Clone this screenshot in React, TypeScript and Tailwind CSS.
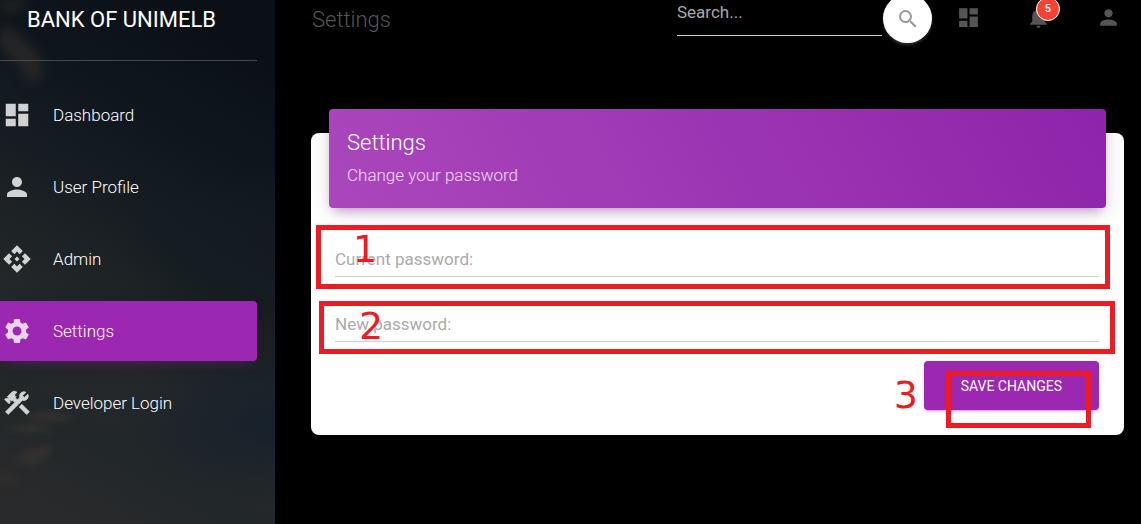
import React from "react";
import {
  MdApi,
  MdDashboard,
  MdNotifications,
  MdPerson,
  MdSearch,
  MdSettings,
} from "react-icons/md";

type NavItem = {
  label: string;
  icon: React.ComponentType<{ className?: string }>;
  active?: boolean;
};

function ToolsIcon({ className }: { className?: string }) {
  return (
    <svg
      aria-hidden="true"
      viewBox="0 0 24 24"
      fill="currentColor"
      stroke="currentColor"
      strokeWidth="0.6"
      className={className}
    >
      <path d="M13.78 15.17l2.12-2.12 6 6-2.12 2.12z" />
      <path d="M17.5 10c1.93 0 3.5-1.57 3.5-3.5 0-.58-.16-1.12-.41-1.6l-2.7 2.7-1.49-1.49 2.7-2.7c-.48-.25-1.02-.41-1.6-.41C15.57 3 14 4.57 14 6.5c0 .41.08.8.21 1.16l-1.85 1.85-1.78-1.78.71-.71-1.41-1.41L12 3.49c-1.17-1.17-3.07-1.17-4.24 0L4.22 7.03l1.41 1.41H2.81l-.71.71 3.54 3.54.71-.71V9.15l1.41 1.41.71-.71 1.78 1.78-7.41 7.41 2.12 2.12L16.34 9.79c.36.13.75.21 1.16.21z" />
    </svg>
  );
}

const navItems: NavItem[] = [
  { label: "Dashboard", icon: MdDashboard },
  { label: "User Profile", icon: MdPerson },
  { label: "Admin", icon: MdApi },
  { label: "Settings", icon: MdSettings, active: true },
  { label: "Developer Login", icon: ToolsIcon },
];

function NightSky() {
  return (
    <svg
      aria-hidden="true"
      className="absolute inset-0 h-full w-full"
      viewBox="0 0 275 524"
      preserveAspectRatio="xMidYMid slice"
    >
      <defs>
        <linearGradient id="sky" x1="0.6" y1="0" x2="0.3" y2="1">
          <stop offset="0" stopColor="#0b1017" />
          <stop offset="0.25" stopColor="#10171e" />
          <stop offset="0.5" stopColor="#1b2124" />
          <stop offset="0.68" stopColor="#25282a" />
          <stop offset="0.85" stopColor="#222729" />
          <stop offset="1" stopColor="#292a2c" />
        </linearGradient>
        <radialGradient id="night">
          <stop offset="0" stopColor="#17212b" />
          <stop offset="1" stopColor="#17212b" stopOpacity="0" />
        </radialGradient>
        <radialGradient id="dusk">
          <stop offset="0" stopColor="#131b21" />
          <stop offset="1" stopColor="#131b21" stopOpacity="0" />
        </radialGradient>
        <filter id="soft" x="-50%" y="-50%" width="200%" height="200%" colorInterpolationFilters="sRGB">
          <feGaussianBlur stdDeviation="6" />
        </filter>
        <filter id="wisp" x="-50%" y="-50%" width="200%" height="200%" colorInterpolationFilters="sRGB">
          <feGaussianBlur stdDeviation="3" />
        </filter>
      </defs>
      <rect width="275" height="524" fill="url(#sky)" />
      <ellipse cx="265" cy="425" rx="150" ry="80" fill="url(#night)" />
      <ellipse cx="270" cy="245" rx="150" ry="80" fill="url(#dusk)" />
      <path d="M0 24 L18 34 L40 56 L44 74 L32 84 L16 62 L0 48Z" fill="#262626" filter="url(#soft)" />
      <path d="M0 0 L28 0 L20 10 L0 12Z" fill="#242424" filter="url(#soft)" />
      <g fill="#32302f" filter="url(#wisp)">
        <path d="M22 414 L52 411 L76 416 L62 422 L36 421Z" />
        <path d="M4 428 L32 424 L56 430 L30 434Z" />
        <path d="M14 456 L34 447 L54 446 L46 458 L30 468Z" />
        <path d="M0 470 L16 478 L22 484 L0 484Z" opacity="0.6" />
      </g>
    </svg>
  );
}

function Sidebar() {
  return (
    <aside className="relative w-[275px] shrink-0 overflow-hidden bg-[#14191e] text-white">
      <NightSky />
      <div className="relative pr-[18px]">
        <div className="border-b border-[#47494b] pt-[5px] pb-[25px] pl-[27px]">
          <a href="#home" className="block text-[22px] leading-[30px]">
            BANK OF UNIMELB
          </a>
        </div>
        <nav className="mt-6">
          <ul className="flex flex-col gap-3">
            {navItems.map(({ label, icon: Icon, active }) => (
              <li key={label}>
                <a
                  href={"#" + label.toLowerCase().replace(" ", "-")}
                  aria-current={active ? "page" : undefined}
                  className={
                    "flex h-[60px] items-center gap-[21px] rounded-r pl-0.5 text-[17px] leading-6 font-light " +
                    (active
                      ? "bg-[#9c27b0] shadow-[0_4px_20px_rgba(0,0,0,0.14),0_7px_10px_-5px_rgba(156,39,176,0.4)]"
                      : "")
                  }
                >
                  <Icon className="size-[30px] text-white opacity-80" />
                  <span>{label}</span>
                </a>
              </li>
            ))}
          </ul>
        </nav>
      </div>
    </aside>
  );
}

function TopBar() {
  return (
    <header className="-mt-1.5 flex h-[49px] items-center pr-5 pl-[37px]">
      <h1 className="mt-0.5 flex-1 text-[22px] font-light text-[#555555]">Settings</h1>
      <form className="flex items-center gap-px" onSubmit={(e) => e.preventDefault()}>
        <input
          type="search"
          aria-label="Search"
          placeholder="Search..."
          className="mb-3 h-[46px] w-[205px] border-b border-[#d2d2d2] bg-transparent text-[17px] text-white outline-none placeholder:text-[#aaaaaa]"
        />
        <button
          type="submit"
          aria-label="Search"
          className="flex size-[49px] items-center justify-center rounded-full bg-white text-[#999999] shadow-[0_2px_3px_rgba(153,153,153,0.3)]"
        >
          <MdSearch className="size-6" />
        </button>
      </form>
      <div className="mb-0.5 ml-6 flex items-center gap-[45px] text-[#555555]">
        <button type="button" aria-label="Dashboard">
          <MdDashboard className="size-[25px]" />
        </button>
        <button type="button" aria-label="Notifications" className="relative">
          <MdNotifications className="size-[25px]" />
          <span className="absolute -top-2 left-2.5 flex size-6 items-center justify-center rounded-full border border-white bg-[#f44336] text-[11px] font-medium text-white">
            5
          </span>
        </button>
        <button type="button" aria-label="Profile">
          <MdPerson className="size-[25px]" />
        </button>
      </div>
    </header>
  );
}

function PasswordField({ id, label }: { id: string; label: string }) {
  return (
    <div className="relative">
      <label htmlFor={id} className="absolute top-[9px] left-0 text-[17px] leading-6 text-[#aaaaaa]">
        {label}
      </label>
      <input
        id={id}
        type="password"
        className="block h-[39px] w-full border-b border-[#d2d2d2] bg-transparent text-[17px] outline-none"
      />
    </div>
  );
}

function Marker({ box, digit, children }: { box: string; digit: string; children: string }) {
  return (
    <>
      <span className={"pointer-events-none absolute border-[5px] border-[#ed1c24] " + box} />
      <span
        className={
          "pointer-events-none absolute font-['DejaVu_Sans',sans-serif] text-[38px] leading-10 text-[#ed1c24] " +
          digit
        }
      >
        {children}
      </span>
    </>
  );
}

function SettingsCard() {
  return (
    <section className="relative mt-[90px] mr-[17px] ml-9 rounded-lg bg-white px-[18px] pb-[25px]">
      <div className="relative -top-6 -mb-6 rounded bg-[linear-gradient(60deg,#ab47bc,#8e24aa)] px-[18px] pt-[18px] pb-[21px] font-light text-white shadow-[0_4px_20px_rgba(0,0,0,0.14),0_7px_10px_-5px_rgba(156,39,176,0.4)]">
        <h2 className="text-[22px] leading-8">Settings</h2>
        <p className="mt-1 text-[17px] leading-6 text-white/80">Change your password</p>
      </div>
      <form className="pt-[30px] pr-[7px] pl-1.5" onSubmit={(e) => e.preventDefault()}>
        <div className="flex flex-col gap-[26px]">
          <PasswordField id="current-password" label="Current password:" />
          <PasswordField id="new-password" label="New password:" />
        </div>
        <div className="mt-[19px] flex justify-end">
          <button
            type="submit"
            className="h-[49px] rounded bg-[#9c27b0] px-[37px] pt-0.5 text-[14px] text-white uppercase shadow-[0_2px_2px_rgba(156,39,176,0.14),0_3px_1px_-2px_rgba(156,39,176,0.2),0_1px_5px_rgba(156,39,176,0.12)]"
          >
            Save changes
          </button>
        </div>
      </form>
      <Marker box="top-[92px] right-[14px] left-[5px] h-16" digit="top-24 left-[42px]">
        1
      </Marker>
      <Marker box="top-[168px] right-[9px] left-2 h-[53px]" digit="top-[173px] left-12">
        2
      </Marker>
      <Marker box="top-[238px] right-[33px] w-[145px] h-[57px]" digit="top-[242px] right-[206px]">
        3
      </Marker>
    </section>
  );
}

export default function App() {
  return (
    <div className="flex min-h-screen bg-black font-[Roboto,sans-serif]">
      <Sidebar />
      <main className="min-w-0 flex-1">
        <TopBar />
        <SettingsCard />
      </main>
    </div>
  );
}
